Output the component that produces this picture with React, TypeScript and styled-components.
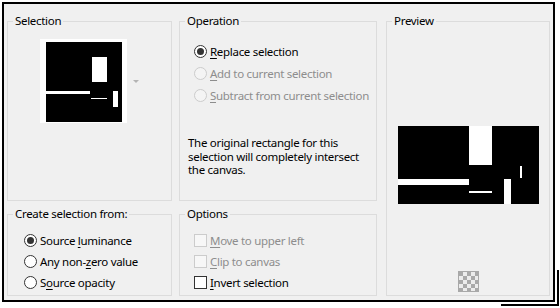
import React from 'react';
import styled, { createGlobalStyle } from 'styled-components';

const GlobalStyle = createGlobalStyle`
  body {
    margin: 0;
    background: #fff;
    font-family: "Noto Sans", "Open Sans", sans-serif;
    font-size: 11.5px;
    letter-spacing: -0.3px;
    color: #000;
  }
`;

type OptionItem = {
  label: React.ReactNode;
  checked?: boolean;
  disabled?: boolean;
};

const operations: OptionItem[] = [
  { label: <><u>R</u>eplace selection</>, checked: true },
  { label: <><u>A</u>dd to current selection</>, disabled: true },
  { label: <><u>S</u>ubtract from current selection</>, disabled: true },
];

const sources: OptionItem[] = [
  { label: <>Source <u>l</u>uminance</>, checked: true },
  { label: <>Any non-<u>z</u>ero value</> },
  { label: <>S<u>o</u>urce opacity</> },
];

const options: OptionItem[] = [
  { label: <><u>M</u>ove to upper left</>, disabled: true },
  { label: <><u>C</u>lip to canvas</>, disabled: true },
  { label: <><u>I</u>nvert selection</> },
];

function SelectionShape({ width, height, preview }: { width: number; height: number; preview?: boolean }) {
  // shapes measured off the reference, thumbnail and preview differ a bit
  const shapes = preview
    ? [
        [71, 0, 23, 39],
        [0, 53, 71, 6],
        [71, 65, 23, 2],
        [106, 53, 7, 25],
        [122, 40, 2, 12],
      ]
    : [
        [46, 15, 15, 25],
        [0, 49, 44, 3],
        [45, 56, 16, 1],
        [67, 49, 5, 16],
      ];

  return (
    <svg width={width} height={height} viewBox={`0 0 ${width} ${height}`}>
      <rect width={width} height={height} fill="#000" />
      {shapes.map(([x, y, w, h]) => (
        <rect key={`${x}-${y}`} x={x} y={y} width={w} height={h} fill="#fff" />
      ))}
    </svg>
  );
}

function CheckerIcon() {
  const cells = [];
  for (let r = 0; r < 5; r += 1) {
    for (let c = 0; c < 5; c += 1) {
      if ((r + c) % 2 === 0) cells.push(<rect key={`${r}${c}`} x={1 + c * 4} y={1 + r * 4} width={4} height={4} fill="#a9a9a9" />);
    }
  }
  return (
    <svg width="21" height="21" viewBox="0 0 21 21">
      <rect x="0.5" y="0.5" width="20" height="20" fill="#ececec" stroke="#a8a8a8" />
      {cells}
    </svg>
  );
}

export default function App() {
  return (
    <>
      <GlobalStyle />
      <Page>
        <Dialog>
          <Group>
            <Legend>Selection</Legend>
            <ThumbRow>
              <ThumbFrame>
                <SelectionShape width={76} height={80} />
              </ThumbFrame>
              <DropArrow />
            </ThumbRow>
          </Group>

          <Group>
            <Legend>Operation</Legend>
            <ChoiceList $top={13} $left={14} $row={22}>
              {operations.map((item, i) => (
                <Choice key={i} $disabled={item.disabled}>
                  <Radio $checked={item.checked} $disabled={item.disabled} />
                  <span>{item.label}</span>
                </Choice>
              ))}
            </ChoiceList>
            <Note>
              The original rectangle for this
              <br />
              selection will completely intersect
              <br />
              the canvas.
            </Note>
          </Group>

          <PreviewGroup>
            <Legend>Preview</Legend>
            <PreviewBody>
              <SelectionShape width={141} height={78} preview />
              <CheckerSlot>
                <CheckerIcon />
              </CheckerSlot>
            </PreviewBody>
          </PreviewGroup>

          <Group>
            <Legend>Create selection from:</Legend>
            <ChoiceList $top={10} $left={16} $row={21}>
              {sources.map((item, i) => (
                <Choice key={i}>
                  <Radio $checked={item.checked} />
                  <span>{item.label}</span>
                </Choice>
              ))}
            </ChoiceList>
          </Group>

          <Group>
            <Legend>Options</Legend>
            <ChoiceList $top={10} $left={14} $row={21}>
              {options.map((item, i) => (
                <Choice key={i} $disabled={item.disabled}>
                  <Box $disabled={item.disabled} />
                  <span>{item.label}</span>
                </Choice>
              ))}
            </ChoiceList>
          </Group>
        </Dialog>
      </Page>
    </>
  );
}

const Page = styled.div`
  width: 560px;
  height: 308px;
  padding: 2px;
  box-sizing: border-box;
`;

const Dialog = styled.div`
  position: relative;
  width: 553px;
  height: 300px;
  box-sizing: border-box;
  border: 2px solid #000;
  background: #f0f0f0;
  padding: 11px 0 0 3px;
  display: grid;
  grid-template-columns: 165px 198px 166px;
  grid-template-rows: 186px 88px;
  column-gap: 7px;
  row-gap: 7px;

  /* the screenshot's offset frame peeking out at the bottom right */
  &:after {
    content: '';
    position: absolute;
    right: -6px;
    bottom: -6px;
    width: 56px;
    height: 34px;
    border-right: 2px solid #000;
    border-bottom: 2px solid #000;
  }
`;

const Group = styled.fieldset`
  margin: 0;
  padding: 0;
  min-width: 0;
  border: 1px solid #dcdcdc;
  display: flex;
  flex-direction: column;
`;

const PreviewGroup = styled(Group)`
  grid-column: 3;
  grid-row: 1 / span 2;
  margin-left: 2px;
`;

const Legend = styled.legend`
  margin-left: 5px;
  padding: 0 2px;
  line-height: 12px;
  color: #000;
`;

const ThumbRow = styled.div`
  display: flex;
  align-items: center;
  padding: 12px 0 0 32px;
`;

const ThumbFrame = styled.div`
  background: #fff;
  padding: 3px 5px 1px 6px;
  line-height: 0;
`;

const DropArrow = styled.div`
  margin-left: 6px;
  width: 0;
  height: 0;
  border-left: 3px solid transparent;
  border-right: 3px solid transparent;
  border-top: 3px solid #b4b4b4;
`;

const ChoiceList = styled.div<{ $top: number; $left: number; $row: number }>`
  display: flex;
  flex-direction: column;
  padding: ${(p) => p.$top}px 0 0 ${(p) => p.$left}px;

  & > div {
    height: ${(p) => p.$row}px;
  }
`;

const Choice = styled.div<{ $disabled?: boolean }>`
  display: flex;
  align-items: center;
  gap: 3px;
  color: ${(p) => (p.$disabled ? '#8d8d8d' : '#000')};
  white-space: nowrap;

  u {
    text-underline-offset: 2px;
  }
`;

const Radio = styled.div<{ $checked?: boolean; $disabled?: boolean }>`
  width: 13px;
  height: 13px;
  box-sizing: border-box;
  border-radius: 50%;
  border: 1px solid ${(p) => (p.$disabled ? '#cccccc' : '#333')};
  background: ${(p) => (p.$disabled ? '#f4f4f4' : '#fff')};
  display: flex;
  align-items: center;
  justify-content: center;
  flex: none;

  &:after {
    content: '';
    width: 7px;
    height: 7px;
    border-radius: 50%;
    background: #333;
    display: ${(p) => (p.$checked ? 'block' : 'none')};
  }
`;

const Box = styled.div<{ $disabled?: boolean }>`
  width: 13px;
  height: 13px;
  box-sizing: border-box;
  border: 1px solid ${(p) => (p.$disabled ? '#cccccc' : '#333')};
  background: ${(p) => (p.$disabled ? '#f7f7f7' : '#fff')};
  flex: none;
`;

const Note = styled.p`
  margin: 30px 0 0 8px;
  line-height: 13.5px;
`;

const PreviewBody = styled.div`
  display: flex;
  flex-direction: column;
  align-items: center;
  padding-top: 99px;
  line-height: 0;
`;

const CheckerSlot = styled.div`
  margin-top: 67px;
`;
